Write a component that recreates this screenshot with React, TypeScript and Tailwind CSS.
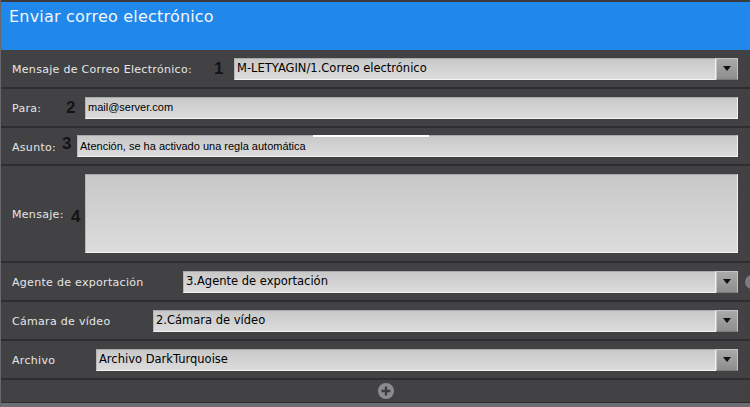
import React from 'react';

const labelFont = { fontFamily: '"DejaVu Sans", Verdana, sans-serif' };

function Num({ n, className = '' }: { n: string; className?: string }) {
  return (
    <span
      className={`shrink-0 text-[17px] font-bold text-[#141414] leading-none ${className}`}
      style={{ fontFamily: '"Liberation Sans", Arial, sans-serif' }}
    >
      {n}
    </span>
  );
}

function Label({ text, w }: { text: string; w: string }) {
  return <span className={`shrink-0 pl-[11px] pt-[4px] text-[11px] tracking-[0.3px] text-[#e6e6e6] ${w}`}>{text}</span>;
}

function Field({ children, select = false, h = 'h-[22px]', sans = false }: { children?: React.ReactNode; select?: boolean; h?: string; sans?: boolean }) {
  return (
    <div className={`flex min-w-0 flex-1 ${h}`}>
      <div
        className="relative flex flex-1 items-center border border-[#f2f2f2] border-t-[#a9a9a9] border-l-[#b5b5b5] bg-gradient-to-b from-[#c8c8c8] to-[#dcdcdc] px-[2px] text-[11.5px] text-black"
        style={sans ? { fontFamily: '"Liberation Sans", Arial, sans-serif', fontSize: '11px' } : labelFont}
      >
        {children}
      </div>
      {select && (
        <div className="flex w-[22px] shrink-0 items-center justify-center border border-[#c4c4c4] border-b-[#7a7a7a] bg-gradient-to-b from-[#aaaaaa] to-[#8e8e8e]">
          <svg width="8" height="5" viewBox="0 0 8 5">
            <path d="M0 0h8L4 5z" fill="#111" />
          </svg>
        </div>
      )}
    </div>
  );
}

function Row({ children, h = 'h-[39px]' }: { children: React.ReactNode; h?: string }) {
  return (
    <div className={`relative flex items-center border-b-2 border-[#2e2e30] pr-[12px] ${h}`}>{children}</div>
  );
}

export default function App() {
  return (
    <div className="h-[407px] w-[750px] overflow-hidden bg-[#424245] border-l border-[#67676d]" style={labelFont}>
      <div className="h-[2px] bg-[#3a3a3d]" />
      <div className="h-[48px] bg-[#2088ea] pl-[8px] pt-[3px]">
        <h1 className="text-[16px] tracking-[0.2px] text-[#f2f6fb]" style={labelFont}>Enviar correo electrónico</h1>
      </div>

      <Row h="h-[39px]">
        <Label w="w-[213px]" text="Mensaje de Correo Electrónico:" />
        <Num n="1" className="w-[20px]" />
        <Field select>M-LETYAGIN/1.Correo electrónico</Field>
      </Row>

      <Row h="h-[39px]">
        <Label w="w-[65px]" text="Para:" />
        <Num n="2" className="w-[19px]" />
        <Field sans>mail@server.com</Field>
      </Row>

      <Row h="h-[38px]">
        <Label w="w-[61px]" text="Asunto:" />
        <Num n="3" className="-mt-[6px] w-[15px]" />
        <Field sans>
          Atención, se ha activado una regla automática
          <span className="absolute -top-px left-[235px] h-[2px] w-[116px] bg-white" />
        </Field>
      </Row>

      <Row h="h-[97px]">
        <Label w="w-[70px]" text="Mensaje:" />
        <Num n="4" className="mt-[6px] w-[14px]" />
        <Field h="h-[79px]" />
      </Row>

      <Row h="h-[39px]">
        <Label w="w-[182px]" text="Agente de exportación" />
        <Field select>3.Agente de exportación</Field>
        <span className="absolute right-[-9px] h-[14px] w-[14px] rounded-full bg-[#7c7c80]" />
      </Row>

      <Row h="h-[39px]">
        <Label w="w-[152px]" text="Cámara de vídeo" />
        <Field select>2.Cámara de vídeo</Field>
      </Row>

      <Row h="h-[39px]">
        <Label w="w-[95px]" text="Archivo" />
        <Field select>Archivo DarkTurquoise</Field>
      </Row>

      <div className="flex h-[22px] items-center justify-center">
        <svg width="16" height="16" viewBox="0 0 16 16" className="ml-[20px]">
          <circle cx="8" cy="8" r="8" fill="#8c8c8e" />
          <path d="M8 3.5v9M3.5 8h9" stroke="#3c3c3e" strokeWidth="2.4" />
        </svg>
      </div>
      <div className="h-[5px] border-t border-[#2e2e30] bg-[#6d6d74]" />
    </div>
  );
}
